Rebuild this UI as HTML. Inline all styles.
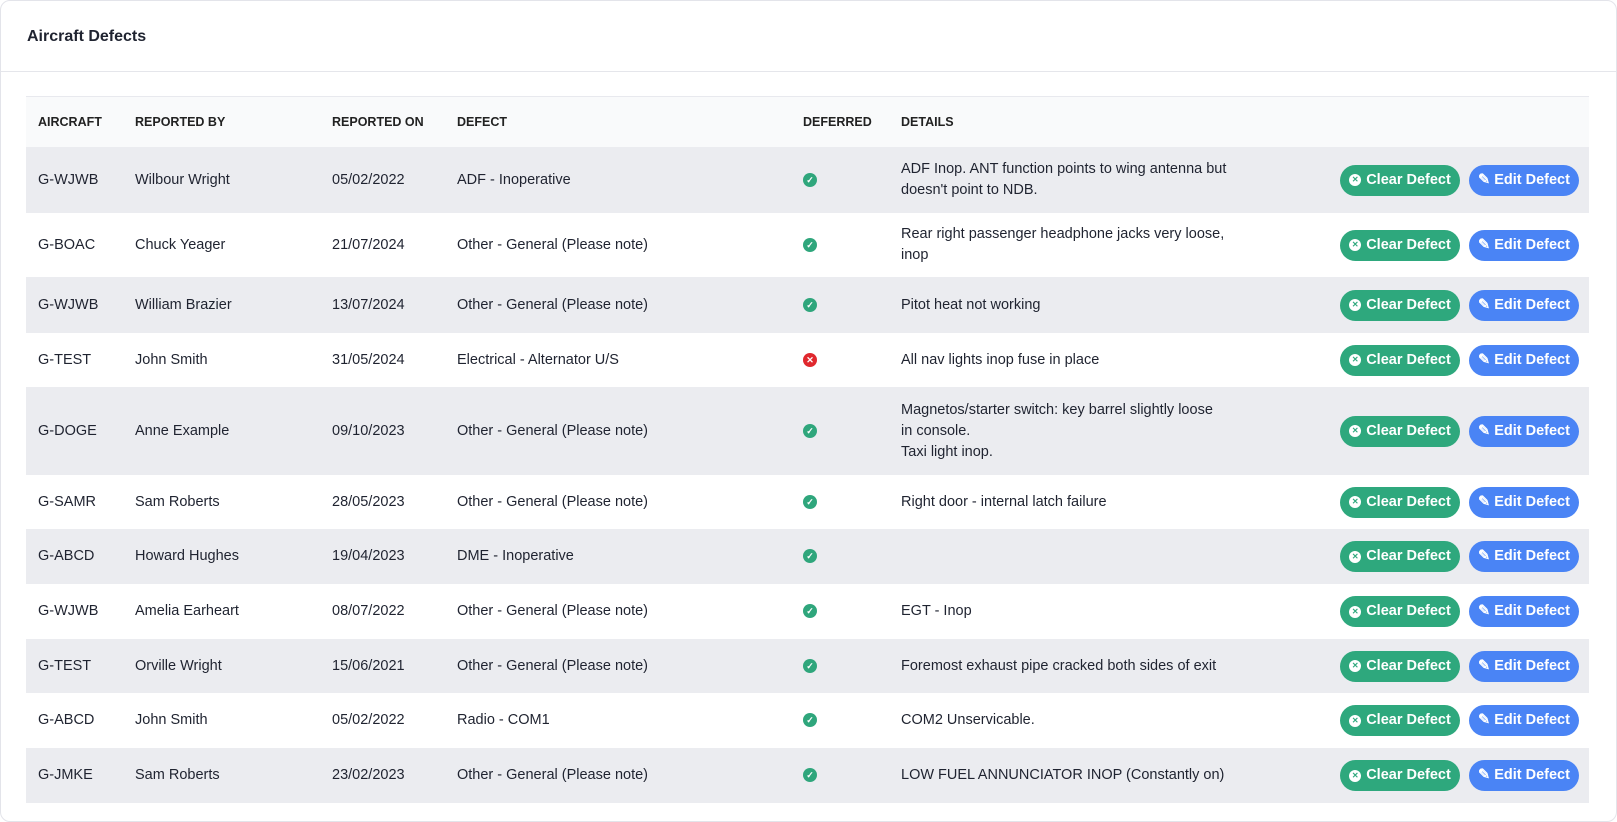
<!DOCTYPE html>
<html><head><style>
body{margin:0;background:#fff;font-family:"Liberation Sans",sans-serif;color:#1f2330;}
.card{position:absolute;left:0;top:0;width:1615px;height:820px;border:1px solid #e3e4ea;border-radius:10px;background:#fff;}
.hdr{height:70px;border-bottom:1px solid #e5e6eb;}
.hdr h1{margin:0;position:absolute;left:26px;top:27px;font-size:16px;font-weight:bold;color:#1f2330;}
table{position:absolute;left:26px;top:96px;width:1563px;border-collapse:collapse;font-size:14.5px;table-layout:fixed}
th{text-align:left;font-size:12.5px;font-weight:bold;height:50px;background:#f9fafb;border-top:1px solid #e8e9ee;padding:0 0 0 12px;color:#222;}
td{padding:0 0 0 12px;vertical-align:middle;line-height:21px;}
tr.g td{background:#ebecf0;}
.ok,.no{display:inline-block;width:14px;height:14px;border-radius:50%;background:#2fa67c;color:#fff;font-size:9px;line-height:14px;text-align:center;font-weight:bold;vertical-align:middle}
.no{background:#e0282e}
.b{display:inline-flex;align-items:center;justify-content:center;height:31px;border-radius:16px;color:#fff;font-size:14.5px;font-weight:bold;vertical-align:middle;white-space:nowrap}
.c{background:#2ea87d;width:120px;margin-right:9px}
.e{background:#4a84f5;width:110px}
.ci{display:inline-block;width:12px;height:12px;border-radius:50%;background:#fff;color:#2ea87d;font-size:8px;line-height:12px;text-align:center;margin-right:5px}
.act{text-align:right;padding-right:10px;white-space:nowrap}
</style></head><body>
<div class="card"><div class="hdr"><h1>Aircraft Defects</h1></div></div>
<table>
<colgroup><col style="width:97px"><col style="width:197px"><col style="width:125px"><col style="width:346px"><col style="width:98px"><col style="width:354px"><col></colgroup>
<tr><th>AIRCRAFT</th><th>REPORTED BY</th><th>REPORTED ON</th><th>DEFECT</th><th>DEFERRED</th><th>DETAILS</th><th></th></tr>
<tr class="g" style="height:66px"><td>G-WJWB</td><td>Wilbour Wright</td><td>05/02/2022</td><td>ADF - Inoperative</td><td><span class="ok">✓</span></td><td>ADF Inop. ANT function points to wing antenna but doesn't point to NDB.</td><td class="act"><span class="b c"><span class="ci">✕</span>Clear Defect</span><span class="b e">✎ Edit Defect</span></td></tr>
<tr style="height:64px"><td>G-BOAC</td><td>Chuck Yeager</td><td>21/07/2024</td><td>Other - General (Please note)</td><td><span class="ok">✓</span></td><td>Rear right passenger headphone jacks very loose, inop</td><td class="act"><span class="b c"><span class="ci">✕</span>Clear Defect</span><span class="b e">✎ Edit Defect</span></td></tr>
<tr class="g" style="height:56px"><td>G-WJWB</td><td>William Brazier</td><td>13/07/2024</td><td>Other - General (Please note)</td><td><span class="ok">✓</span></td><td>Pitot heat not working</td><td class="act"><span class="b c"><span class="ci">✕</span>Clear Defect</span><span class="b e">✎ Edit Defect</span></td></tr>
<tr style="height:54px"><td>G-TEST</td><td>John Smith</td><td>31/05/2024</td><td>Electrical - Alternator U/S</td><td><span class="no">✕</span></td><td>All nav lights inop fuse in place</td><td class="act"><span class="b c"><span class="ci">✕</span>Clear Defect</span><span class="b e">✎ Edit Defect</span></td></tr>
<tr class="g" style="height:88px"><td>G-DOGE</td><td>Anne Example</td><td>09/10/2023</td><td>Other - General (Please note)</td><td><span class="ok">✓</span></td><td>Magnetos/starter switch: key barrel slightly loose<br>in console.<br>Taxi light inop.</td><td class="act"><span class="b c"><span class="ci">✕</span>Clear Defect</span><span class="b e">✎ Edit Defect</span></td></tr>
<tr style="height:54px"><td>G-SAMR</td><td>Sam Roberts</td><td>28/05/2023</td><td>Other - General (Please note)</td><td><span class="ok">✓</span></td><td>Right door - internal latch failure</td><td class="act"><span class="b c"><span class="ci">✕</span>Clear Defect</span><span class="b e">✎ Edit Defect</span></td></tr>
<tr class="g" style="height:55px"><td>G-ABCD</td><td>Howard Hughes</td><td>19/04/2023</td><td>DME - Inoperative</td><td><span class="ok">✓</span></td><td></td><td class="act"><span class="b c"><span class="ci">✕</span>Clear Defect</span><span class="b e">✎ Edit Defect</span></td></tr>
<tr style="height:55px"><td>G-WJWB</td><td>Amelia Earheart</td><td>08/07/2022</td><td>Other - General (Please note)</td><td><span class="ok">✓</span></td><td>EGT - Inop</td><td class="act"><span class="b c"><span class="ci">✕</span>Clear Defect</span><span class="b e">✎ Edit Defect</span></td></tr>
<tr class="g" style="height:54px"><td>G-TEST</td><td>Orville Wright</td><td>15/06/2021</td><td>Other - General (Please note)</td><td><span class="ok">✓</span></td><td>Foremost exhaust pipe cracked both sides of exit</td><td class="act"><span class="b c"><span class="ci">✕</span>Clear Defect</span><span class="b e">✎ Edit Defect</span></td></tr>
<tr style="height:55px"><td>G-ABCD</td><td>John Smith</td><td>05/02/2022</td><td>Radio - COM1</td><td><span class="ok">✓</span></td><td>COM2 Unservicable.</td><td class="act"><span class="b c"><span class="ci">✕</span>Clear Defect</span><span class="b e">✎ Edit Defect</span></td></tr>
<tr class="g" style="height:55px"><td>G-JMKE</td><td>Sam Roberts</td><td>23/02/2023</td><td>Other - General (Please note)</td><td><span class="ok">✓</span></td><td>LOW FUEL ANNUNCIATOR INOP (Constantly on)</td><td class="act"><span class="b c"><span class="ci">✕</span>Clear Defect</span><span class="b e">✎ Edit Defect</span></td></tr>
</table>
</body></html>
